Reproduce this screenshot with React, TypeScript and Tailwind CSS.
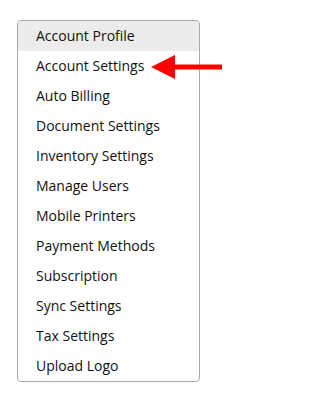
const items = [
  'Account Profile',
  'Account Settings',
  'Auto Billing',
  'Document Settings',
  'Inventory Settings',
  'Manage Users',
  'Mobile Printers',
  'Payment Methods',
  'Subscription',
  'Sync Settings',
  'Tax Settings',
  'Upload Logo',
];

export default function App() {
  return (
    <div className="relative w-[246px] h-[417px] bg-white pt-[20px] pl-[17px]" style={{ fontFamily: '"Open Sans", sans-serif' }}>
      <ul className="w-[183px] border border-[#aaaaaa] rounded-[4px] overflow-hidden">
        {items.map((label, i) => (
          <li
            key={label}
            className={`h-[30px] flex items-center pl-[18px] pb-[2px] text-[14px] font-medium text-[#111] ${i === 0 ? 'bg-[#ececec]' : ''}`}
          >
            {label}
          </li>
        ))}
      </ul>

      {/* red arrow pointing at Account Settings */}
      <svg className="absolute left-[150px] top-[54px]" width="74" height="27" viewBox="0 0 74 27">
        <polygon points="1,13 25,1 25,25" fill="#ff0000" />
        <rect x="24" y="10.5" width="48" height="5" fill="#ff0000" />
      </svg>
    </div>
  );
}
